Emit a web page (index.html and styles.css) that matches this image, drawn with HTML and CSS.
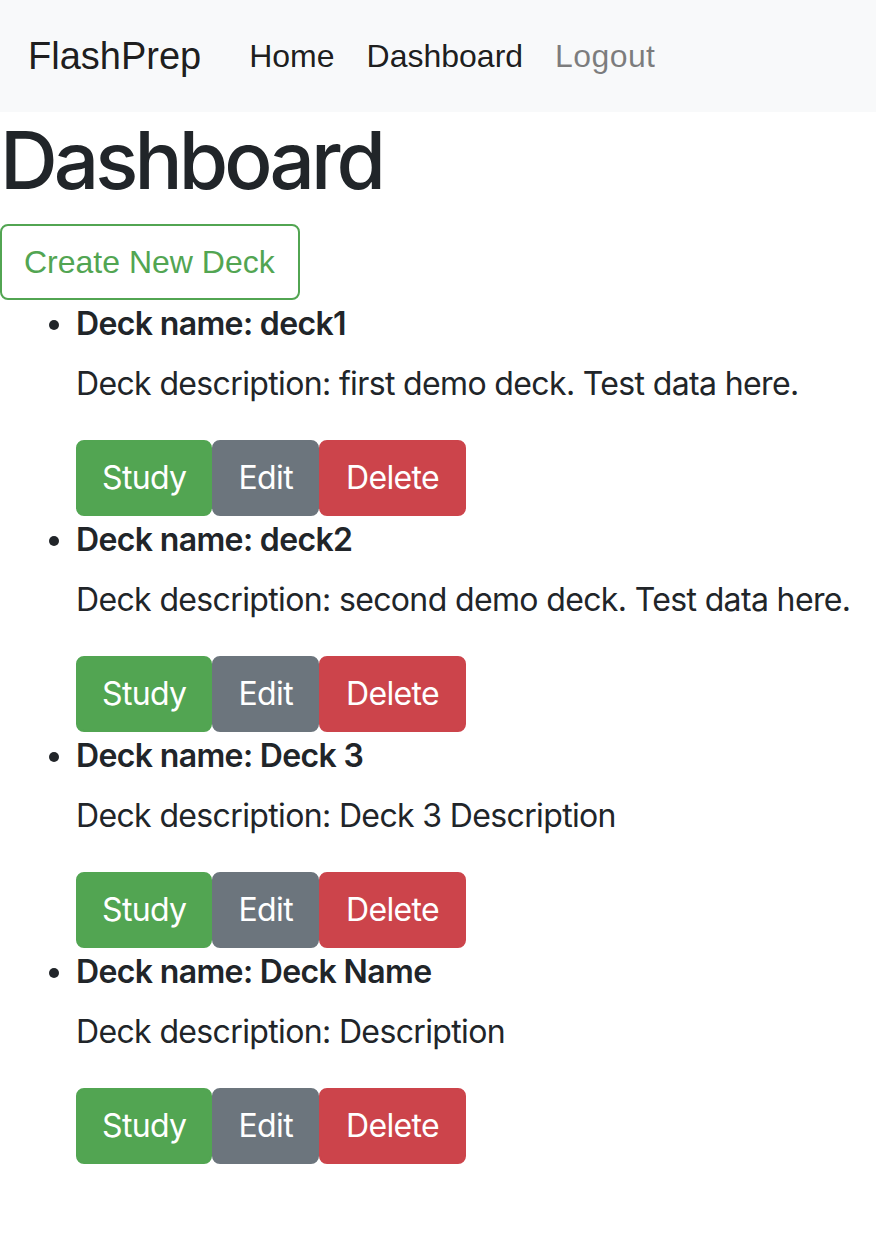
FILE: index.html
```html
<!DOCTYPE html>
<html lang="en">
<head>
<meta charset="utf-8">
<title>FlashPrep</title>
<link rel="stylesheet" href="styles.css">
</head>
<body>
<nav class="navbar">
  <a class="brand" href="#">FlashPrep</a>
  <ul class="nav">
    <li><a class="nav-link active" href="#">Home</a></li>
    <li><a class="nav-link active" href="#">Dashboard</a></li>
    <li><a class="nav-link muted" href="#">Logout</a></li>
  </ul>
</nav>
<main>
  <h1 class="title">Dashboard</h1>
  <button class="btn btn-outline-success">Create New Deck</button>
  <ul class="decks">
    <li class="deck">
      <div class="deck-name">Deck name: deck1</div>
      <p class="deck-desc">Deck description: first demo deck. Test data here.</p>
      <div class="actions"><button class="btn btn-success">Study</button><button class="btn btn-secondary">Edit</button><button class="btn btn-danger">Delete</button></div>
    </li>
    <li class="deck">
      <div class="deck-name">Deck name: deck2</div>
      <p class="deck-desc">Deck description: second demo deck. Test data here.</p>
      <div class="actions"><button class="btn btn-success">Study</button><button class="btn btn-secondary">Edit</button><button class="btn btn-danger">Delete</button></div>
    </li>
    <li class="deck">
      <div class="deck-name">Deck name: Deck 3</div>
      <p class="deck-desc">Deck description: Deck 3 Description</p>
      <div class="actions"><button class="btn btn-success">Study</button><button class="btn btn-secondary">Edit</button><button class="btn btn-danger">Delete</button></div>
    </li>
    <li class="deck">
      <div class="deck-name">Deck name: Deck Name</div>
      <p class="deck-desc">Deck description: Description</p>
      <div class="actions"><button class="btn btn-success">Study</button><button class="btn btn-secondary">Edit</button><button class="btn btn-danger">Delete</button></div>
    </li>
  </ul>
</main>
</body>
</html>
```

FILE: styles.css
```css
* { box-sizing: border-box; }
html, body { margin: 0; padding: 0; background: #fff; }
body {
  font-family: Inter, "Noto Sans", sans-serif;
  font-size: 32px;
  line-height: 48px;
  letter-spacing: -0.64px;
  color: #212529;
}
.navbar {
  display: flex;
  align-items: center;
  height: 112px;
  padding: 16px 28px;
  background: #f8f9fa;
  font-family: "Liberation Sans", Arial, sans-serif;
  letter-spacing: 0;
}
.brand {
  font-size: 38px;
  line-height: 56px;
  color: rgba(0,0,0,0.9);
  text-decoration: none;
  margin-right: 32px;
}
.nav {
  display: flex;
  list-style: none;
  margin: 0;
  padding: 0;
}
.nav-link {
  display: block;
  padding: 16px 16px;
  font-size: 32px;
  line-height: 48px;
  text-decoration: none;
}
.nav-link.active { color: rgba(0,0,0,0.9); }
.nav-link.muted { color: rgba(0,0,0,0.5); letter-spacing: 0.4px; }
.title {
  margin: 0 0 16px 0;
  font-size: 80px;
  line-height: 96px;
  font-weight: 500;
  letter-spacing: -3.9px;
}
.btn {
  display: inline-block;
  font-family: Inter, "Noto Sans", sans-serif;
  font-size: 32px;
  line-height: 48px;
  letter-spacing: -0.64px;
  padding: 12px 24px;
  border: 2px solid transparent;
  border-radius: 8px;
  color: #fff;
  cursor: pointer;
}
.btn-outline-success {
  background: #fff;
  color: #52a552;
  border-color: #52a552;
  font-family: "Liberation Sans", Arial, sans-serif;
  letter-spacing: 0;
  padding: 12px 23px 12px 22px;
}
.btn-success { background: #52a552; border-color: #52a552; }
.btn-secondary { background: #6c757d; border-color: #6c757d; }
.btn-danger { background: #cc444b; border-color: #cc444b; padding: 12px 25px; }
.decks {
  margin: 0 0 32px 0;
  padding-left: 76px;
}
.deck-name {
  font-weight: 600;
  margin-bottom: 12px;
}
.deck-desc {
  margin: 0 0 32px 0;
}
.actions {
  display: flex;
}
```
